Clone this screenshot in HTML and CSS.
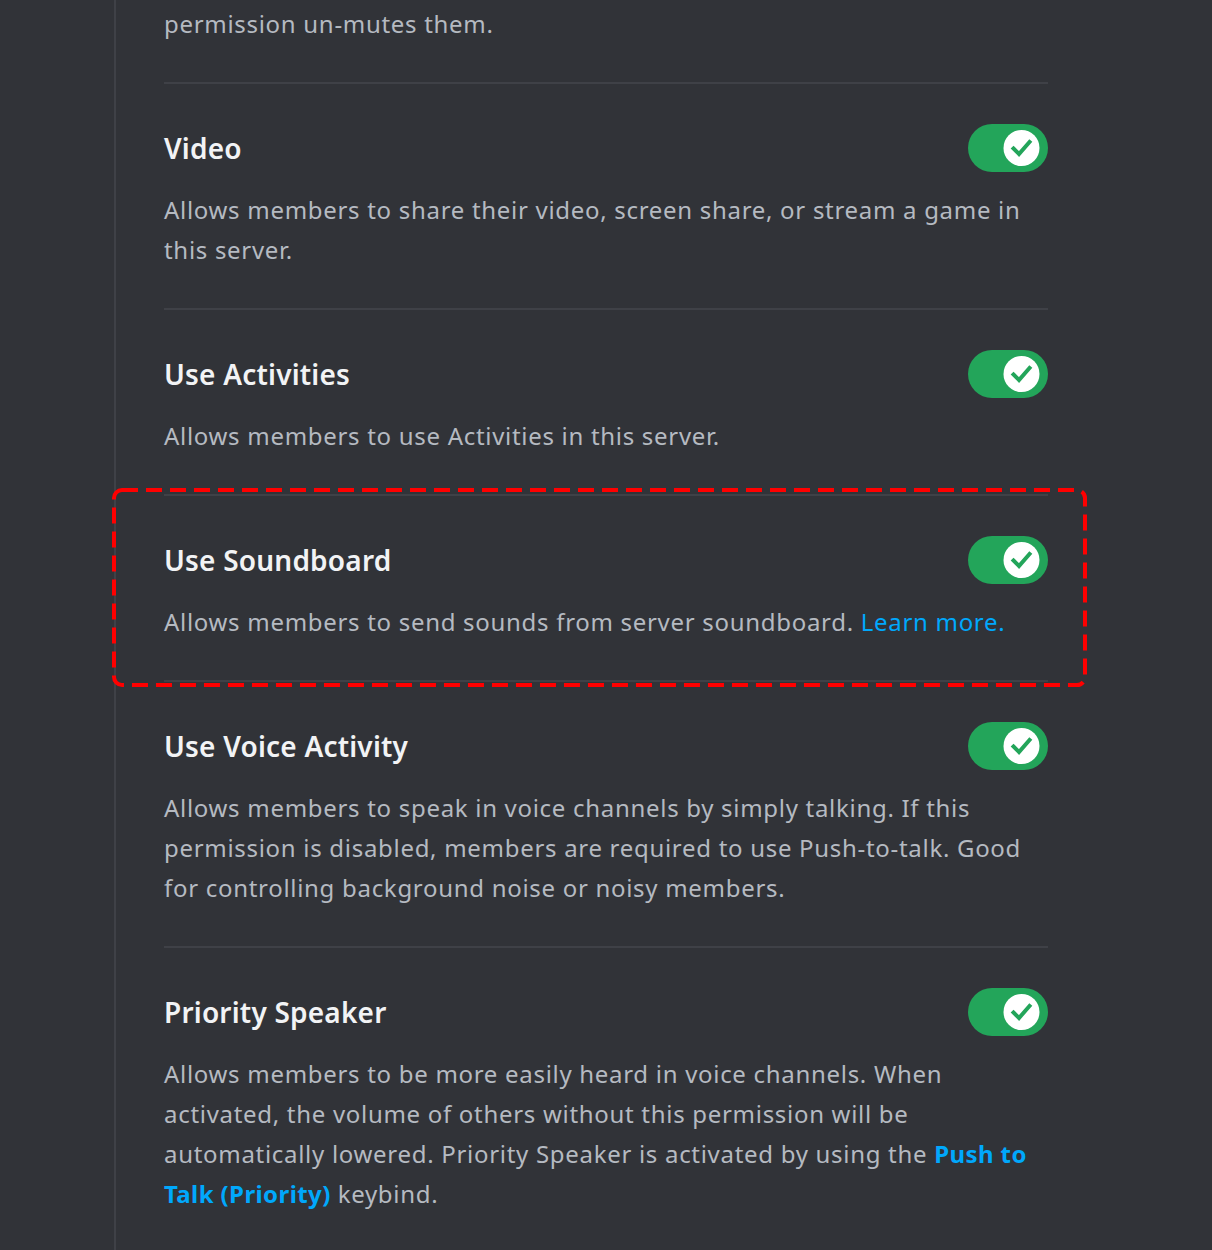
FILE: index.html
```html
<!DOCTYPE html>
<html lang="en">
<head>
<meta charset="utf-8">
<title>Permissions</title>
<link rel="stylesheet" href="styles.css">
</head>
<body>
<div class="page">
  <div class="column">
    <p class="desc first">permission un-mutes them.</p>

    <section class="perm">
      <div class="perm-head">
        <h3 class="perm-title">Video</h3>
        <svg class="toggle" viewBox="0 0 80 48" width="80" height="48"><rect width="80" height="48" rx="24" fill="#23a55a"/><circle cx="53.5" cy="24" r="18" fill="#fff"/><polyline points="45.5,24.5 51,30 61.5,18" fill="none" stroke="#23a55a" stroke-width="4" stroke-linecap="square"/></svg>
      </div>
      <p class="desc">Allows members to share their video, screen share, or stream a game in this server.</p>
    </section>

    <section class="perm">
      <div class="perm-head">
        <h3 class="perm-title">Use Activities</h3>
        <svg class="toggle" viewBox="0 0 80 48" width="80" height="48"><rect width="80" height="48" rx="24" fill="#23a55a"/><circle cx="53.5" cy="24" r="18" fill="#fff"/><polyline points="45.5,24.5 51,30 61.5,18" fill="none" stroke="#23a55a" stroke-width="4" stroke-linecap="square"/></svg>
      </div>
      <p class="desc">Allows members to use Activities in this server.</p>
    </section>

    <section class="perm highlighted">
      <svg class="highlight-box" viewBox="0 0 975 199" width="975" height="199"><rect x="2" y="2" width="971" height="195" rx="8" fill="none" stroke="#ff0000" stroke-width="4" stroke-dasharray="16 8"/></svg>
      <div class="perm-head">
        <h3 class="perm-title">Use Soundboard</h3>
        <svg class="toggle" viewBox="0 0 80 48" width="80" height="48"><rect width="80" height="48" rx="24" fill="#23a55a"/><circle cx="53.5" cy="24" r="18" fill="#fff"/><polyline points="45.5,24.5 51,30 61.5,18" fill="none" stroke="#23a55a" stroke-width="4" stroke-linecap="square"/></svg>
      </div>
      <p class="desc">Allows members to send sounds from server soundboard. <a class="link" href="#">Learn more.</a></p>
    </section>

    <section class="perm">
      <div class="perm-head">
        <h3 class="perm-title">Use Voice Activity</h3>
        <svg class="toggle" viewBox="0 0 80 48" width="80" height="48"><rect width="80" height="48" rx="24" fill="#23a55a"/><circle cx="53.5" cy="24" r="18" fill="#fff"/><polyline points="45.5,24.5 51,30 61.5,18" fill="none" stroke="#23a55a" stroke-width="4" stroke-linecap="square"/></svg>
      </div>
      <p class="desc">Allows members to speak in voice channels by simply talking. If this permission is disabled, members are required to use Push-to-talk. Good for controlling background noise or noisy members.</p>
    </section>

    <section class="perm">
      <div class="perm-head">
        <h3 class="perm-title">Priority Speaker</h3>
        <svg class="toggle" viewBox="0 0 80 48" width="80" height="48"><rect width="80" height="48" rx="24" fill="#23a55a"/><circle cx="53.5" cy="24" r="18" fill="#fff"/><polyline points="45.5,24.5 51,30 61.5,18" fill="none" stroke="#23a55a" stroke-width="4" stroke-linecap="square"/></svg>
      </div>
      <p class="desc">Allows members to be more easily heard in voice channels. When activated, the volume of others without this permission will be automatically lowered. Priority Speaker is activated by using the <a class="link strong" href="#">Push to Talk (Priority)</a> keybind.</p>
    </section>
  </div>
</div>
</body>
</html>
```
FILE: styles.css
```css
html, body {
  margin: 0;
  padding: 0;
  background: #313338;
}
body {
  font-family: "Noto Sans", "Open Sans", sans-serif;
  height: 1250px;
  overflow: hidden;
}
.page {
  margin-left: 114px;
  border-left: 2px solid #3f4147;
  min-height: 1250px;
  padding-left: 48px;
}
.column {
  width: 884px;
}
.desc {
  margin: 0;
  font-size: 24px;
  line-height: 40px;
  letter-spacing: 0.7px;
  color: #b5bac1;
}
.desc.first {
  padding-top: 4px;
  padding-bottom: 38px;
}
.perm {
  position: relative;
  border-top: 2px solid #3f4147;
  padding: 40px 0 38px;
}
.perm-head {
  display: flex;
  align-items: center;
  justify-content: space-between;
  height: 48px;
}
.perm-title {
  margin: 0;
  font-size: 28px;
  font-weight: 600;
  color: #f2f3f5;
  line-height: 40px;
  letter-spacing: 0.2px;
}
.toggle {
  display: block;
  flex: none;
}
.perm .desc {
  margin-top: 18px;
}
.link {
  color: #00a8fc;
  text-decoration: none;
}
.link.strong {
  font-weight: 700;
  letter-spacing: 0.4px;
}
.highlight-box {
  position: absolute;
  left: -52px;
  top: -8px;
  pointer-events: none;
}
```
